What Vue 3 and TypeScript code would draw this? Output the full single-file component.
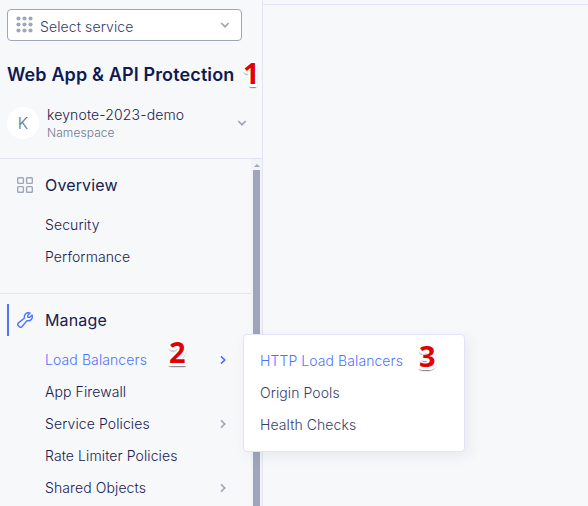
<script setup lang="ts">
interface NavItem {
  label: string
  active?: boolean
  expandable?: boolean
}

const overviewItems: NavItem[] = [{ label: 'Security' }, { label: 'Performance' }]

const manageItems: NavItem[] = [
  { label: 'Load Balancers', active: true, expandable: true },
  { label: 'App Firewall' },
  { label: 'Service Policies', expandable: true },
  { label: 'Rate Limiter Policies' },
  { label: 'Shared Objects', expandable: true },
]

const flyoutItems: NavItem[] = [
  { label: 'HTTP Load Balancers', active: true },
  { label: 'Origin Pools' },
  { label: 'Health Checks' },
]
</script>

<template>
  <div class="page">
    <aside class="sidebar">
      <header class="head">
        <div class="select">
          <svg class="grid-icon" width="18" height="18" viewBox="0 0 18 18" fill="#9fa6b9">
            <template v-for="r in 3" :key="r">
              <circle v-for="c in 3" :key="c" :cx="c * 6 - 3.5" :cy="r * 6 - 3.5" r="2.1" />
            </template>
          </svg>
          <span class="select-text">Select service</span>
          <svg class="chev" width="10" height="6" viewBox="0 0 10 6"><path d="M1.2 1 5 4.7 8.8 1" /></svg>
        </div>
        <h1 class="title">Web App &amp; API Protection</h1>
        <div class="namespace">
          <span class="avatar">K</span>
          <div class="ns-text">
            <span class="ns-name">keynote-2023-demo</span>
            <span class="ns-label">Namespace</span>
          </div>
          <svg class="chev" width="10" height="6" viewBox="0 0 10 6"><path d="M1.2 1 5 4.7 8.8 1" /></svg>
        </div>
      </header>
      <div class="body">
        <nav class="nav">
          <section class="group overview">
            <h2 class="group-title">
              <svg width="16" height="16" viewBox="0 0 16 16" fill="none" stroke="#9fa6b9" stroke-width="1.4">
                <rect x="0.7" y="0.7" width="5.7" height="5.7" rx="0.8" />
                <rect x="9.6" y="0.7" width="5.7" height="5.7" rx="0.8" />
                <rect x="0.7" y="9.6" width="5.7" height="5.7" rx="0.8" />
                <rect x="9.6" y="9.6" width="5.7" height="5.7" rx="0.8" />
              </svg>
              <span>Overview</span>
            </h2>
            <ul>
              <li v-for="item in overviewItems" :key="item.label">{{ item.label }}</li>
            </ul>
          </section>
          <section class="group manage">
            <h2 class="group-title current">
              <svg width="16" height="16" viewBox="0 0 16 16" fill="none" stroke="#4f73ff" stroke-width="1.4" stroke-linejoin="round" stroke-linecap="round">
                <path d="M13.1 1.1A4.1 4.1 0 0 0 7.5 6L1.2 11.1C.5 11.8.5 12.8 1.2 13.5L2.5 14.8C3.2 15.5 4.2 15.5 4.9 14.8L10 8.6A4.1 4.1 0 0 0 15 3.1L12.6 5.4 10.8 5.2 10.7 3.4Z" />
              </svg>
              <span>Manage</span>
            </h2>
            <ul>
              <li v-for="item in manageItems" :key="item.label" :class="{ active: item.active }">
                <span>{{ item.label }}</span>
                <svg v-if="item.expandable" class="arrow" width="6" height="10" viewBox="0 0 6 10"><path d="M1 1.4 4.7 5 1 8.6" /></svg>
              </li>
            </ul>
          </section>
        </nav>
        <div class="scrollbar"><i class="up"></i><i class="thumb"></i></div>
      </div>
    </aside>
    <main class="main"><div class="topline"></div></main>

    <ul class="flyout">
      <li v-for="item in flyoutItems" :key="item.label" :class="{ active: item.active }">{{ item.label }}</li>
    </ul>

    <span class="marker one">1</span>
    <span class="marker two">2</span>
    <span class="marker three">3</span>
  </div>
</template>

<style>
body { margin: 0; }
</style>

<style scoped>
.page {
  position: relative;
  display: flex;
  width: 588px;
  height: 506px;
  overflow: hidden;
  background: #f7f8fa;
  color: #172050;
  font-family: Inter, 'Liberation Sans', sans-serif;
  font-size: 14px;
  font-weight: 350;
}
* { box-sizing: border-box; }
ul { list-style: none; margin: 0; padding: 0; }
.sidebar {
  width: 263px;
  height: 506px;
  display: flex;
  flex-direction: column;
  border-right: 1px solid #e2e4f3;
}
.head {
  height: 159px;
  flex: none;
  padding: 9px 0 0 7px;
  border-bottom: 1px solid #e2e4f3;
}
.select {
  display: flex;
  align-items: center;
  width: 235px;
  height: 32px;
  padding: 0 11px 0 8px;
  border: 1px solid #9fa6b9;
  border-radius: 4px;
  background: #fff;
}
.select-text { flex: 1; padding: 2px 0 0 6px; letter-spacing: 0.12px; color: #343c62; }
.chev, .arrow { fill: none; stroke: #9fa6b9; stroke-width: 1.7; }
.title {
  margin: 22px 0 0;
  font-size: 18px;
  line-height: 24px;
  font-weight: 600;
  letter-spacing: 0.13px;
  white-space: nowrap;
  color: #0e1a54;
}
.namespace { display: flex; align-items: center; margin-top: 20px; width: 240px; height: 32px; }
.avatar {
  width: 32px;
  height: 32px;
  border-radius: 50%;
  background: #fff;
  color: #666f85;
  font-size: 16px;
  line-height: 33px;
  text-align: center;
}
.ns-text { flex: 1; display: flex; flex-direction: column; padding: 2px 0 0 8px; }
.ns-name { line-height: 18px; letter-spacing: 0.13px; }
.ns-label { font-size: 12px; line-height: 18px; letter-spacing: 0.08px; color: #70788e; }
.body { flex: 1; min-height: 0; display: flex; }
.nav { width: 251px; overflow: hidden; }
.group-title {
  display: flex;
  align-items: center;
  height: 32px;
  margin: 0 0 0 7px;
  padding-left: 10px;
  font-size: 16px;
  font-weight: 400;
  letter-spacing: 0.15px;
  gap: 12px;
}
.current { border-left: 2px solid #4f73ff; padding-left: 8px; }
.overview { height: 135px; padding-top: 10px; border-bottom: 1px solid #e2e4f3; }
.manage { padding-top: 10px; }
.group ul { padding: 7px 0 0 45px; }
.group li {
  display: flex;
  align-items: center;
  justify-content: space-between;
  height: 32px;
  padding-right: 25px;
  letter-spacing: 0.1px;
  white-space: nowrap;
}
.arrow { position: relative; top: 0.5px; }
.active { color: #4f73ff; }
.active .arrow { stroke: #4f73ff; }
.scrollbar { width: 11px; display: flex; flex-direction: column; align-items: center; background: #f2f3f9; }
.up {
  margin: 5px 0 3px;
  border: 3px solid transparent;
  border-top: 0;
  border-bottom-color: #9fa6b9;
}
.thumb { flex: 1; width: 7px; background: #9fa6b9; }
.main { flex: 1; }
.topline { height: 5px; border-bottom: 1px solid #e2e4f3; }
.flyout {
  position: absolute;
  left: 243px;
  top: 334px;
  width: 222px;
  height: 118px;
  padding: 10px 16px;
  border: 1px solid #e2e4f3;
  border-radius: 4px;
  background: #fff;
  box-shadow: 4px 4px 14px rgba(30, 40, 90, 0.07);
}
.flyout li { height: 32px; line-height: 32px; letter-spacing: 0.08px; color: #343e6b; }
.flyout li.active { color: #4f73ff; }
.marker {
  position: absolute;
  font: 700 29px/30px 'Open Sans', sans-serif;
  color: #e30000;
  text-shadow: 1px 0 #fff, -1px 0 #fff, 0 -1px #fff, 2px 0 #fff, -2px 0 #fff, 2px 2px #fff, -2px 2px #fff,
    0 2px #fff, 0 3px #fff, 1px 3px #fff, -1px 3px #fff, 2px 3px #fff, 1px 4px 1px #888, -1px 4px 1px #999, 2px 3px 1px #aaa;
}
.one { left: 243px; top: 58px; }
.two { left: 169px; top: 337px; }
.three { left: 419px; top: 341px; }
</style>
